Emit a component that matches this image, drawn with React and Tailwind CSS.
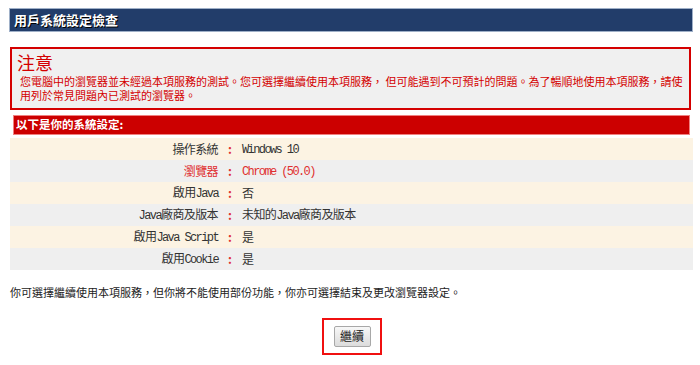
const rows = [
  { label: "操作系統", value: "Windows 10", bg: "bg-[#fcf3e3]" },
  { label: "瀏覽器", value: "Chrome (50.0)", bg: "bg-[#efefef]", red: true },
  { label: "啟用Java", value: "否", bg: "bg-[#fcf3e3]" },
  { label: "Java廠商及版本", value: "未知的Java廠商及版本", bg: "bg-[#efefef]" },
  { label: "啟用Java Script", value: "是", bg: "bg-[#fcf3e3]" },
  { label: "啟用Cookie", value: "是", bg: "bg-[#efefef]" },
];

// latin runs get the narrow mono look, CJK stays normal
const Mixed = ({ text }) => {
  const parts = text.match(/[\x00-\x7f]+|[^\x00-\x7f]+/g) || [];
  return parts.map((p, i) =>
    /^[\x00-\x7f]+$/.test(p) ? (
      <span
        key={i}
        className="text-[12px] tracking-[-1.6px] whitespace-pre"
        style={{ fontFamily: '"Liberation Mono", monospace' }}
      >
        {p}
      </span>
    ) : (
      <span key={i} className="tracking-[-0.6px]">
        {p}
      </span>
    )
  );
};

const App = () => {
  return (
    <div
      className="w-[700px] h-[365px] bg-white pt-2 pl-[9px] text-[12px] text-[#333]"
      style={{ fontFamily: '"Noto Sans CJK TC", "Noto Sans", sans-serif' }}
    >
      <div className="w-[684px] flex flex-col">
        <div className="h-[24px] bg-[#223d6a] border border-[#9fb0c8] flex items-center pl-[4px]">
          <span className="text-white font-bold text-[13px] [text-shadow:1px_1px_0_#000]">
            用戶系統設定檢查
          </span>
        </div>

        <div className="mt-[15px] ml-[1px] w-[681px] h-[63px] border-2 border-[#d40000] bg-[#f0f0f0] pl-[5px] pt-[1px]">
          <div className="text-[#d40000] text-[18px] leading-[24px]">注意</div>
          <div className="text-[#d40000] text-[11px] leading-[14px] pl-[3px]">
            您電腦中的瀏覽器並未經過本項服務的測試。您可選擇繼續使用本項服務， 但可能遇到不可預計的問題。為了暢順地使用本項服務，請使用列於常見問題內已測試的瀏覽器。
          </div>
        </div>

        <div className="mt-[5px] ml-[4px] w-[677px] h-[20px] bg-[#cc0000] border border-[#f08080] flex items-center pl-[2px]">
          <span className="text-white font-bold text-[11.5px]">以下是你的系統設定:</span>
        </div>

        <div className="mt-[3px] ml-[1px] w-[683px] flex flex-col">
          {rows.map((r) => (
            <div
              key={r.label}
              className={`h-[22px] flex items-center ${r.bg} ${r.red ? "text-[#e03030]" : "text-[#333]"}`}
            >
              <div className="w-[208px] text-right">
                <Mixed text={r.label} />
              </div>
              <div className="w-[24px] text-center text-[#e03030] font-bold">:</div>
              <div>
                <Mixed text={r.value} />
              </div>
            </div>
          ))}
        </div>

        <div className="mt-[14px] ml-[1px] text-[11px] text-[#222]">
          你可選擇繼續使用本項服務，但你將不能使用部份功能，你亦可選擇結束及更改瀏覽器設定。
        </div>

        <div className="mt-[17px] flex justify-center">
          <div className="w-[60px] h-[37px] border-2 border-[#f01010] flex items-center justify-center ml-[2px]">
            <button className="w-[37px] h-[21px] text-[12px] text-[#222] border border-[#a8a8a8] rounded-[2px] bg-gradient-to-b from-[#f8f8f8] to-[#dcdcdc] leading-none">
              繼續
            </button>
          </div>
        </div>
      </div>
    </div>
  );
};

export default App;
